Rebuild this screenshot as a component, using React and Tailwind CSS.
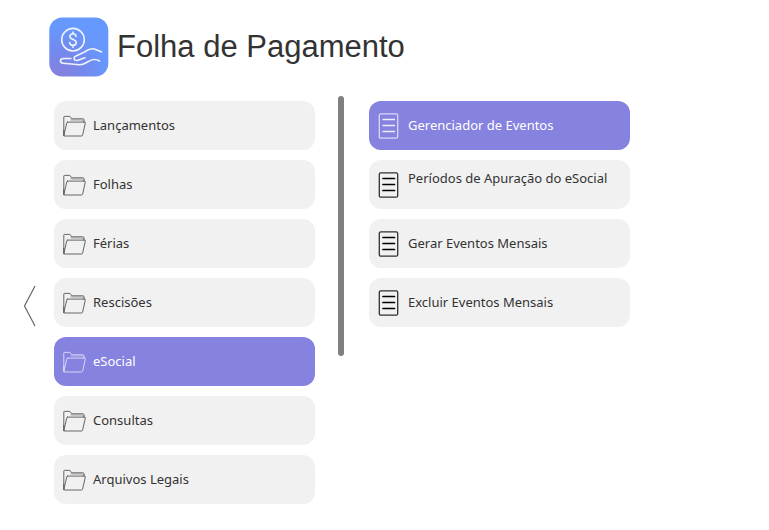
import React from 'react';
import { clsx } from 'clsx';

const folders = ['Lançamentos', 'Folhas', 'Férias', 'Rescisões', 'eSocial', 'Consultas', 'Arquivos Legais'];

const pages = [
  { label: 'Gerenciador de Eventos' },
  { label: 'Períodos de Apuração do eSocial', tall: true },
  { label: 'Gerar Eventos Mensais' },
  { label: 'Excluir Eventos Mensais' },
];

function FolderIcon({ active }) {
  return (
    <svg width="24" height="22" viewBox="0 0 24 22" fill="none" stroke="currentColor" strokeLinejoin="round" strokeLinecap="round" aria-hidden="true" className={active ? 'text-[#d6d4f6]' : 'text-[#666]'}>
      <path d="M.8 20.500V2q0-.6.6-.6h5.200q.6 0 .9.6l1 1.800h11.400q1.200 0 1.200 1.200v2.200" strokeWidth="1" />
      <path d="M8 5h11.500q.7 0 .9 2" strokeWidth=".6" />
      <path d="M4.600 7.100h17q.9 0 .7.9l-2.700 12.200q-.2.800-1 .8H1.400q-.7 0-.5-.8L3.800 7.800q.2-.7.8-.7z" strokeWidth="1" />
      <path d="M.8 15.500v5" strokeWidth="1.4" />
    </svg>
  );
}

function PageIcon({ active }) {
  return (
    <svg width="21" height="26" viewBox="0 0 21 26" fill="none" stroke="currentColor" aria-hidden="true" className={active ? 'text-[#efeefc]' : 'text-black'}>
      <rect x="1.3" y=".8" width="18.400" height="24.400" rx="1.500" strokeWidth="1.300" strokeOpacity=".8" />
      <path d="M5 6.500h11.500M5 12.500h11.500M5 18.500h11.500" strokeWidth={active ? '1.4' : '1.7'} strokeLinecap="round" />
    </svg>
  );
}

function LogoIcon() {
  return (
    <svg width="60" height="60" viewBox="0 0 60 60" fill="none" aria-hidden="true">
      <defs>
        <radialGradient id="logoFill" cx="12" cy="58" r="48" gradientUnits="userSpaceOnUse">
          <stop offset="0" stopColor="#8580dc" />
          <stop offset=".5" stopColor="#7489ed" />
          <stop offset="1" stopColor="#6698fd" />
        </radialGradient>
      </defs>
      <rect x=".3" y=".5" width="59" height="59" rx="13" fill="url(#logoFill)" />
      <g stroke="#eef3ff" strokeWidth="1.6" strokeLinecap="round" strokeLinejoin="round">
        <circle cx="24" cy="22.7" r="11.3" />
        <path d="M27 19.500c-.2-1.800-1.300-2.700-3-2.700-1.800 0-3 1-3 2.700 0 4 6.200 2 6.200 6 0 1.800-1.300 2.900-3.200 2.900-1.900 0-3.200-1.100-3.300-2.900M24 15v2M24 28.400v2" />
        <path d="M22 41.500H14.500C10.500 41.500 10.500 46 14 46.300L30.500 47.700C36.500 48 40 42.500 45 42.500c2.500 0 4 .5 5.500 1.500" />
        <path d="M36 40.800c-3 .7-5 2.400-8 2.700-3.500.2-4-3.300-1-4.500l8.500-4C40 32.200 43 31 46 32.200c3 1.300 4.500 2.200 6.500 2.700" />
      </g>
    </svg>
  );
}

function MenuItem({ icon: Icon, label, active, tall }) {
  return (
    <button
      type="button"
      aria-pressed={!!active}
      className={clsx(
        'flex h-[49px] w-full items-center rounded-xl pl-[9px] text-left',
        active ? 'bg-[#8682df] text-white' : 'bg-[#f1f1f1] text-[#333]',
      )}
    >
      <span className="flex w-[30px] shrink-0 items-center">
        <Icon active={active} />
      </span>
      <span className={clsx('pb-0.5 text-[13px] leading-4', tall && 'min-h-[30px]')}>{label}</span>
    </button>
  );
}

export default function App() {
  return (
    <main className="min-h-screen bg-white font-['Noto_Sans',sans-serif]">
      <header className="flex items-center gap-2 pt-[17px] pl-[49px]">
        <LogoIcon />
        <h1 className="font-['Liberation_Sans',Arial,sans-serif] text-[31px] leading-10 text-[#333]">Folha de Pagamento</h1>
      </header>
      <div className="flex max-w-[630px] pt-[19px] pl-[23px]">
        <button type="button" aria-label="Voltar" className="mr-[17px] shrink-0 pb-2.5">
          <svg width="14" height="42" viewBox="0 0 14 42" fill="none" stroke="#666" strokeWidth="1.2" aria-hidden="true">
            <path d="M12 1 1.500 21 12 41" />
          </svg>
        </button>
        <nav aria-label="Categorias" className="flex flex-1 flex-col gap-2.5 pt-[5px] pb-[22px]">
          {folders.map((label) => (
            <MenuItem key={label} icon={FolderIcon} label={label} active={label === 'eSocial'} />
          ))}
        </nav>
        <div className="mr-[25px] ml-[23px] h-[260px] w-1.5 shrink-0 rounded-full bg-[#808080]" />
        <nav aria-label="eSocial" className="flex flex-1 flex-col gap-2.5 pt-[5px]">
          {pages.map((page, i) => (
            <MenuItem key={page.label} icon={PageIcon} label={page.label} tall={page.tall} active={i === 0} />
          ))}
        </nav>
      </div>
    </main>
  );
}
